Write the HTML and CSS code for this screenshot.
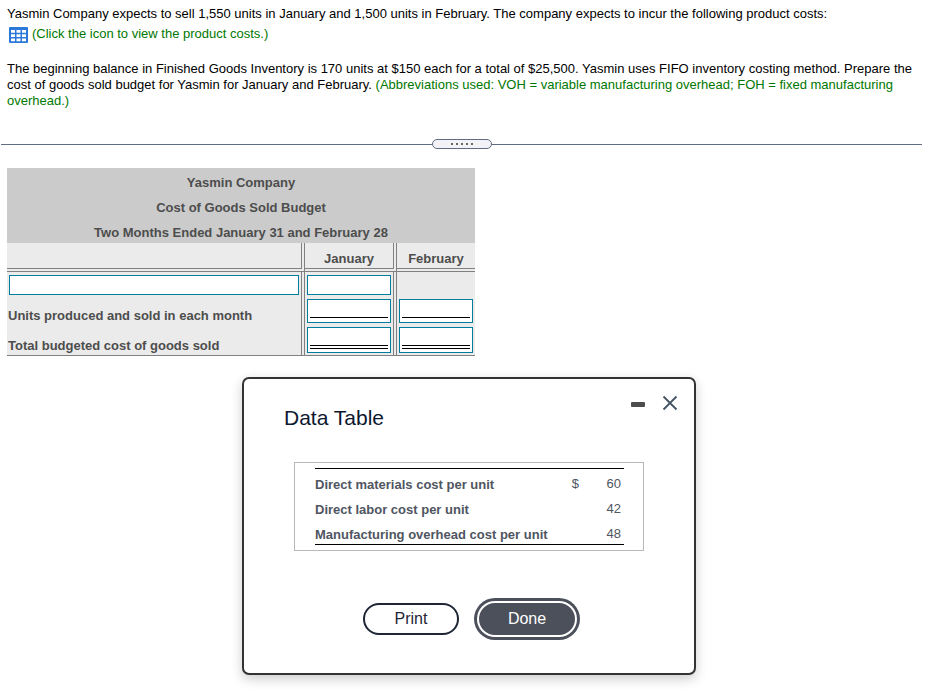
FILE: index.html
```
<!DOCTYPE html>
<html lang="en">
<head>
    <meta charset="UTF-8">
    <meta name="viewport" content="width=device-width, initial-scale=1.0">
    <title>Cost of Goods Sold Budget</title>
    <link rel="stylesheet" href="styles.css">
</head>
<body>
    <!-- Problem statement -->
    <section class="question">
        <p>Yasmin Company expects to sell 1,550 units in January and 1,500 units in February. The company expects to incur the following product costs:</p>
        <a class="costs-link" href="#data-table">
            <svg width="20" height="18" viewBox="0 0 20 18" aria-hidden="true">
                <rect x="0" y="1" width="19" height="16" rx="1" fill="#2a78d8"/>
                <path fill="#fff" d="M2 3.9h4v2.8H2zM7.5 3.9h4v2.8h-4zM13 3.9h4v2.8h-4zM2 8.2h4v2.8H2zM7.5 8.2h4v2.8h-4zM13 8.2h4v2.8h-4zM2 12.5h4v2.8H2zM7.5 12.5h4v2.8h-4zM13 12.5h4v2.8h-4z"/>
            </svg>
            <span>(Click the icon to view the product costs.)</span>
        </a>
        <p>The beginning balance in Finished Goods Inventory is 170 units at $150 each for a total of $25,500. Yasmin uses FIFO inventory costing method. Prepare the cost of goods sold budget for Yasmin for January and February. <span class="note">(Abbreviations used: VOH = variable manufacturing overhead; FOH = fixed manufacturing overhead.)</span></p>
    </section>

    <div class="splitter">
        <button class="splitter-handle" type="button" aria-label="Resize panels">
            <i></i><i></i><i></i><i></i><i></i>
        </button>
    </div>

    <!-- Budget worksheet -->
    <table class="budget">
        <caption>
            Yasmin Company<br>
            Cost of Goods Sold Budget<br>
            Two Months Ended January 31 and February 28
        </caption>
        <thead>
            <tr>
                <td class="col-label"></td>
                <th class="col-jan" scope="col">January</th>
                <th class="col-feb" scope="col">February</th>
            </tr>
        </thead>
        <tbody>
            <tr>
                <td><div class="field"><input type="text" aria-label="Line item"></div></td>
                <td><div class="field"><input type="text" aria-label="Line item, January"></div></td>
                <td></td>
            </tr>
            <tr>
                <th scope="row">Units produced and sold in each month</th>
                <td><div class="field subtotal"><input type="text" aria-label="Units produced and sold, January"></div></td>
                <td><div class="field subtotal"><input type="text" aria-label="Units produced and sold, February"></div></td>
            </tr>
            <tr>
                <th scope="row">Total budgeted cost of goods sold</th>
                <td><div class="field total"><input type="text" aria-label="Total cost, January"></div></td>
                <td><div class="field total"><input type="text" aria-label="Total cost, February"></div></td>
            </tr>
        </tbody>
    </table>

    <!-- Product costs popup -->
    <div id="data-table" class="dialog" role="dialog" aria-labelledby="dialog-title">
        <header class="dialog-header">
            <h2 id="dialog-title">Data Table</h2>
            <div class="dialog-tools">
                <button type="button" aria-label="Minimize">
                    <svg width="16" height="16" viewBox="0 0 16 16"><rect x="1" y="7" width="14" height="5" rx="1" fill="#4d4d4d"/></svg>
                </button>
                <button type="button" aria-label="Close">
                    <svg width="16" height="16" viewBox="0 0 16 16"><path d="M1.5 1.5l13 13M14.5 1.5l-13 13" fill="none" stroke="#455463" stroke-width="1.8"/></svg>
                </button>
            </div>
        </header>

        <div class="costs-box">
            <table class="costs">
                <tr>
                    <th scope="row">Direct materials cost per unit</th>
                    <td>$</td>
                    <td>60</td>
                </tr>
                <tr>
                    <th scope="row">Direct labor cost per unit</th>
                    <td></td>
                    <td>42</td>
                </tr>
                <tr>
                    <th scope="row">Manufacturing overhead cost per unit</th>
                    <td></td>
                    <td>48</td>
                </tr>
            </table>
        </div>

        <footer class="dialog-actions">
            <button class="btn" type="button">Print</button>
            <button class="btn btn-primary" type="button">Done</button>
        </footer>
    </div>
</body>
</html>
```
FILE: styles.css
```
* {
    box-sizing: border-box;
}
body {
    margin: 0;
    padding-bottom: 18px;
    background: #fff;
    color: #000;
    font-family: "Liberation Sans", Arial, sans-serif;
    font-size: 13px;
    line-height: 16px;
}
button {
    padding: 0;
    font-family: inherit;
    cursor: pointer;
}

/* Problem statement */
.question {
    padding: 6px 7px 0;
}
.question p {
    margin: 0;
}
.costs-link {
    display: flex;
    gap: 3px;
    margin: 4px 0 17px 2px;
    color: #007800;
    text-decoration: none;
}
.note {
    color: #007800;
}

/* Splitter */
.splitter {
    display: flex;
    align-items: center;
    margin: 30px 10px 0 1px;
}
.splitter::before,
.splitter::after {
    content: "";
    flex: 1;
    height: 1px;
    background: #5f6d80;
}
.splitter-handle {
    display: flex;
    align-items: center;
    justify-content: center;
    gap: 3px;
    width: 60px;
    height: 10px;
    border: 1px solid #5f6d80;
    border-radius: 5px;
    background: #f2f2f7;
}
.splitter-handle i {
    width: 2px;
    height: 2px;
    background: #666;
}

/* Budget worksheet */
.budget {
    width: 468px;
    margin: 19px 0 0 7px;
    border-bottom: 1px solid #808080;
    border-spacing: 0;
    table-layout: fixed;
    background: #ebebeb;
    color: #4d4d4d;
}
.budget caption {
    height: 75px;
    padding-top: 2px;
    background: #cbcbcb;
    font-weight: bold;
    line-height: 25px;
}
.budget th,
.budget td {
    padding: 2px;
    vertical-align: bottom;
}
.budget tr > :not(:last-child) {
    border-right: 4px double #808080;
}
.budget thead tr > * {
    height: 29px;
    border-bottom: 4px double #808080;
}
.budget tbody tr {
    height: 25px;
}
.budget th {
    padding-bottom: 1px;
}
.budget tbody th {
    padding-left: 1px;
    text-align: left;
}
.col-label {
    width: 298px;
}
.col-jan {
    width: 92px;
}
.col-feb {
    width: 78px;
}
.field {
    display: flex;
    height: 20px;
    padding: 2px;
    border: 1px solid #007d9c;
    background: #fff;
}
.field input {
    width: 100%;
    min-width: 0;
    padding: 0;
    border: 0;
    outline: 0;
    background: none;
    font: inherit;
}
.subtotal {
    height: 24px;
    padding-bottom: 4px;
}
.field.subtotal input {
    border-bottom: 1px solid #000;
}
.total {
    height: 26px;
    padding-bottom: 3px;
}
.field.total input {
    border-bottom: 4px double #000;
}

/* Popup */
.dialog {
    max-width: 454px;
    margin: 21px 0 0 242px;
    padding: 16px 14px 38px 40px;
    border: 2px solid #333;
    border-radius: 7px;
    background: #fff;
    box-shadow: 0 4px 12px rgba(0, 0, 0, 0.2);
}
.dialog-header {
    display: flex;
    justify-content: space-between;
}
.dialog h2 {
    margin: 11px 0 0;
    color: #0d1830;
    font-size: 21px;
    font-weight: normal;
    line-height: 24px;
}
.dialog-tools {
    display: flex;
    align-items: flex-start;
    gap: 16px;
    padding-right: 2px;
}
.dialog-tools button {
    display: flex;
    border: 0;
    background: none;
}
.costs-box {
    margin: 32px 36px 0 10px;
    padding: 5px 19px 5px 20px;
    border: 1px solid #b8b8b8;
}
.costs {
    width: 100%;
    border-top: 1px solid #000;
    border-bottom: 1px solid #000;
    border-spacing: 0;
    color: #4f5561;
}
.costs th,
.costs td {
    height: 25px;
    padding: 0 3px 0 0;
}
.costs th {
    padding-top: 7px;
    text-align: left;
}
.costs td {
    padding-top: 5px;
    text-align: right;
}
.costs td:last-child {
    width: 42px;
}
.dialog-actions {
    display: flex;
    justify-content: center;
    gap: 20px;
    margin-top: 52px;
    padding-right: 26px;
}
.btn {
    width: 96px;
    height: 32px;
    border: 2px solid #1f2636;
    border-radius: 16px;
    background: #fff;
    color: #1f2636;
    font-size: 16px;
}
.btn-primary {
    border-color: #4c505b;
    background: #4c505b;
    color: #fff;
    box-shadow: 0 0 0 2px #fff, 0 0 0 5px #4c505b;
}
```
